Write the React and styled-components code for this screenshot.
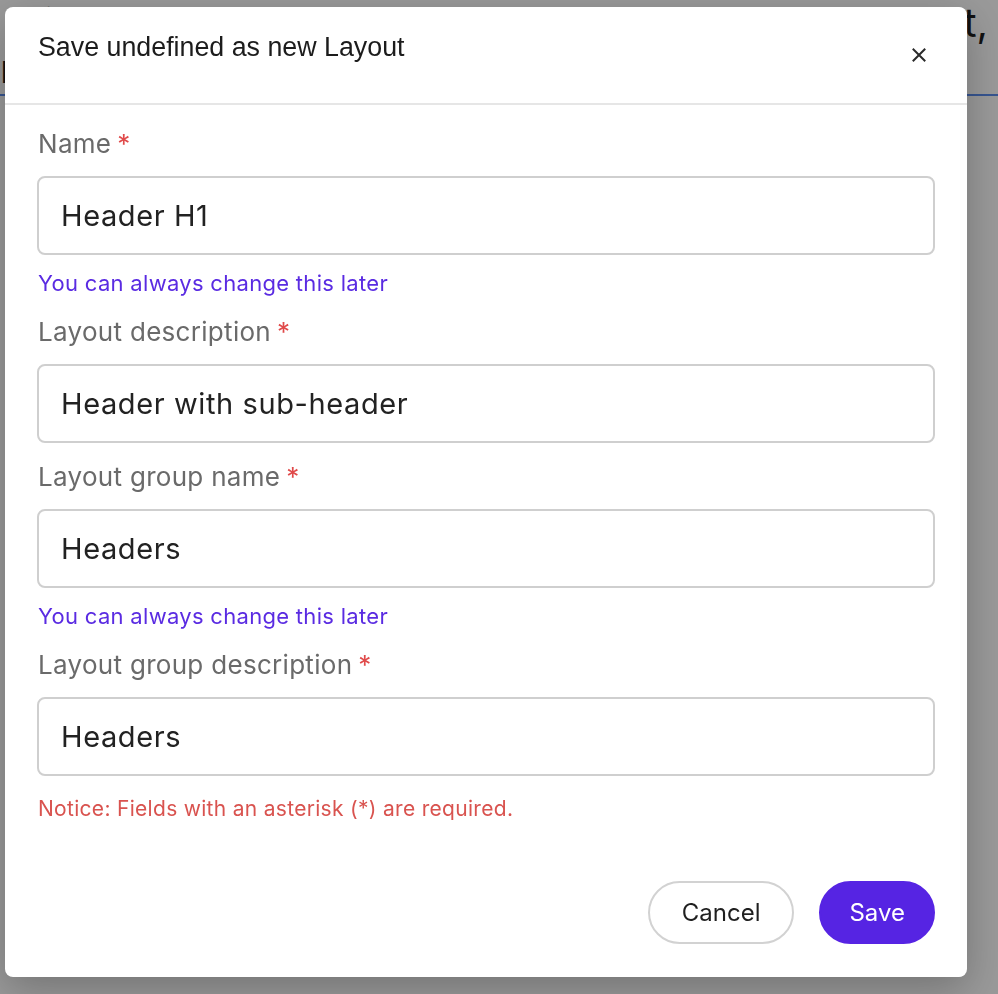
import React from 'react';
import styled, { createGlobalStyle } from 'styled-components';

const GlobalStyle = createGlobalStyle`
  html, body {
    margin: 0;
    padding: 0;
    background: #ffffff;
  }
  * {
    box-sizing: border-box;
  }
`;

// The page that sits behind the modal
const Page = styled.div`
  min-height: 100vh;
  font-family: 'Inter', 'Liberation Sans', sans-serif;
  color: #1d1d1d;
`;

const PageHeader = styled.header`
  height: 96px;
  border-bottom: 2px solid #5b8def;
  overflow: hidden;
`;

const HeadLine = styled.div`
  font-size: 40px;
  line-height: 46px;
  white-space: nowrap;
  overflow: hidden;
  text-align: ${({ $align }) => $align || 'left'};
  padding: 0 ${({ $align }) => ($align === 'right' ? '10px' : '0')} 0 0;
`;

const Overlay = styled.div`
  position: fixed;
  inset: 0;
  background: rgba(0, 0, 0, 0.4);
  display: flex;
  align-items: flex-start;
  padding: 7px 0 0 5px;
`;

const Dialog = styled.div`
  width: 962px;
  background: #ffffff;
  border-radius: 8px;
  box-shadow: 0 12px 40px rgba(0, 0, 0, 0.25);
  font-family: 'Inter', 'Liberation Sans', sans-serif;
`;

const DialogHeader = styled.div`
  display: flex;
  justify-content: space-between;
  align-items: flex-start;
  height: 98px;
  padding: 24px 36px 0 33px;
  border-bottom: 2px solid #e6e6e6;
`;

const Title = styled.h2`
  margin: 0;
  font-family: 'Liberation Sans', Arial, sans-serif;
  font-weight: 400;
  font-size: 26.8px;
  line-height: 32px;
  color: #1c1c1c;
`;

const CloseButton = styled.button`
  width: 24px;
  height: 24px;
  margin-top: 12px;
  padding: 0;
  border: none;
  background: transparent;
  display: flex;
  align-items: center;
  justify-content: center;
  color: #2a2a2a;
  cursor: pointer;
`;

const Body = styled.div`
  display: flex;
  flex-direction: column;
  gap: 18px;
  padding: 23px 32px 0 32px;
`;

const Field = styled.div`
  display: flex;
  flex-direction: column;
`;

const Label = styled.label`
  font-size: 26px;
  line-height: 32px;
  letter-spacing: 0.3px;
  color: #6a6a6a;
  margin-bottom: 16px;
  padding-left: 1px;
`;

const Required = styled.span`
  color: #e04a4a;
  margin-left: 6px;
`;

const Input = styled.input`
  height: 79px;
  width: 100%;
  border: 2px solid #cfcfcf;
  border-radius: 8px;
  padding: 0 22px;
  font-family: 'Inter', 'Liberation Sans', sans-serif;
  font-size: 29px;
  letter-spacing: 0.6px;
  color: #222222;
  background: #ffffff;
  outline: none;
`;

const Helper = styled.div`
  margin-top: ${({ $tone }) => ($tone === 'error' ? '0' : '13px')};
  font-size: ${({ $tone }) => ($tone === 'error' ? '21px' : '22px')};
  line-height: 30px;
  letter-spacing: 0.3px;
  padding-left: 1px;
  color: ${({ $tone }) => ($tone === 'error' ? '#d9534f' : '#5a2be2')};
`;

const Footer = styled.div`
  display: flex;
  justify-content: flex-end;
  gap: 25px;
  padding: 57px 32px 33px 32px;
`;

const Button = styled.button`
  height: 63px;
  border-radius: 32px;
  padding: 0 ${({ $primary }) => ($primary ? '28px' : '32px')};
  font-family: 'Inter', 'Liberation Sans', sans-serif;
  font-size: 24px;
  cursor: pointer;
  border: 2px solid ${({ $primary }) => ($primary ? '#5624e3' : '#d2d2d2')};
  background: ${({ $primary }) => ($primary ? '#5624e3' : '#ffffff')};
  color: ${({ $primary }) => ($primary ? '#ffffff' : '#1f1f1f')};
`;

const fields = [
  { id: 'name', label: 'Name', value: 'Header H1', hint: true },
  { id: 'description', label: 'Layout description', value: 'Header with sub-header' },
  { id: 'group', label: 'Layout group name', value: 'Headers', hint: true },
  { id: 'groupDescription', label: 'Layout group description', value: 'Headers' },
];

const CloseIcon = () => (
  <svg width="14" height="14" viewBox="0 0 14 14" fill="none">
    <path d="M1.5 1.5L12.5 12.5M12.5 1.5L1.5 12.5" stroke="currentColor" strokeWidth="2" strokeLinecap="square" />
  </svg>
);

const App = () => {
  return (
    <>
      <GlobalStyle />
      <Page>
        <PageHeader>
          <HeadLine $align="right">Pick the header block you want to keep as a layout,</HeadLine>
          <HeadLine>reuse it later from the layouts panel</HeadLine>
        </PageHeader>
      </Page>
      <Overlay>
        <Dialog role="dialog">
          <DialogHeader>
            <Title>Save undefined as new Layout</Title>
            <CloseButton aria-label="Close">
              <CloseIcon />
            </CloseButton>
          </DialogHeader>
          <Body>
            {fields.map((f) => (
              <Field key={f.id}>
                <Label htmlFor={f.id}>
                  {f.label}
                  <Required>*</Required>
                </Label>
                <Input id={f.id} defaultValue={f.value} />
                {f.hint && <Helper>You can always change this later</Helper>}
              </Field>
            ))}
            <Helper $tone="error">Notice: Fields with an asterisk (*) are required.</Helper>
          </Body>
          <Footer>
            <Button>Cancel</Button>
            <Button $primary>Save</Button>
          </Footer>
        </Dialog>
      </Overlay>
    </>
  );
};

export default App;
